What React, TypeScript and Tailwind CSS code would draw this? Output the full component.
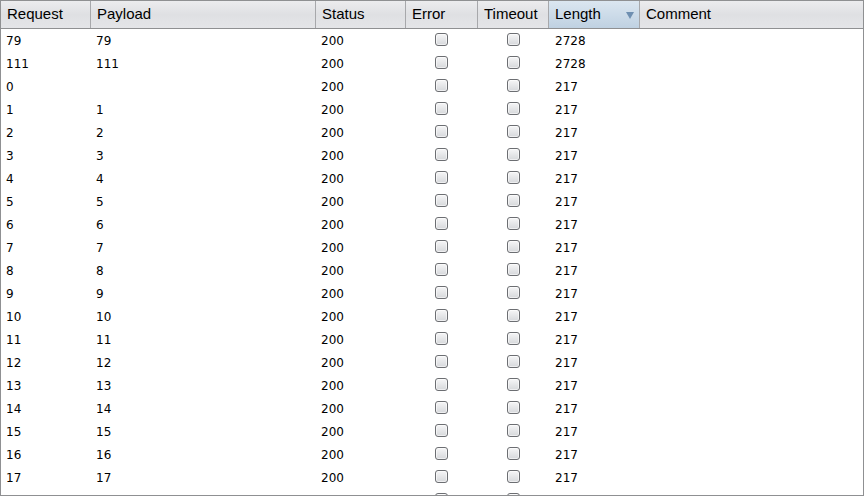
import React from 'react';

interface Row {
  request: string;
  payload: string;
  status: string;
  length: string;
}

const rows: Row[] = [
  { request: '79', payload: '79', status: '200', length: '2728' },
  { request: '111', payload: '111', status: '200', length: '2728' },
  { request: '0', payload: '', status: '200', length: '217' },
  ...Array.from({ length: 17 }).map((_, i) => ({
    request: String(i + 1),
    payload: String(i + 1),
    status: '200',
    length: '217',
  })),
  // partially scrolled-in row at the bottom edge
  { request: '', payload: '', status: '', length: '' },
];

const cols = 'grid grid-cols-[90px_225px_90px_72px_71px_91px_1fr]';

const Checkbox: React.FC = () => (
  <div className="w-[13px] h-[13px] rounded-[3px] border border-[#6c6e72] bg-gradient-to-b from-[#f6f6f7] to-[#d6d8db] shadow-[inset_0_0_0_1px_#ffffff90]" />
);

const HeaderCell: React.FC<{ label: string; active?: boolean; last?: boolean }> = ({ label, active, last }) => (
  <div
    className={`relative flex items-center pl-[6px] h-full ${last ? '' : 'border-r border-[#a7a8ab]'} ${
      active ? 'bg-gradient-to-b from-[#dbe6f0] to-[#bfd1e2]' : ''
    }`}
  >
    {label}
    {active && (
      <svg className="absolute right-[5px] top-[11px]" width="8" height="7" viewBox="0 0 8 7">
        <path d="M0 0 H8 L4 7 Z" fill="#6f8fb1" />
      </svg>
    )}
  </div>
);

export default function App() {
  return (
    <div className="w-[865px] h-[497px] bg-white overflow-hidden">
      <div className="w-[864px] h-[496px] border border-[#8f9092] overflow-hidden relative">
        <div
          className={`${cols} h-[28px] border-b border-[#8f9092] bg-gradient-to-b from-[#ececee] via-[#dfe0e3] to-[#e4e5e8] text-[15px] text-black`}
          style={{ fontFamily: '"Liberation Sans", Arial, sans-serif' }}
        >
          <HeaderCell label="Request" />
          <HeaderCell label="Payload" />
          <HeaderCell label="Status" />
          <HeaderCell label="Error" />
          <HeaderCell label="Timeout" />
          <HeaderCell label="Length" active />
          <HeaderCell label="Comment" last />
        </div>
        <div className="text-[12px] text-black" style={{ fontFamily: '"DejaVu Sans", Tahoma, sans-serif' }}>
          {rows.map((r, i) => (
            <div key={i} className={`${cols} h-[23px] items-center`}>
              <div className="pl-[5px] pt-px">{r.request}</div>
              <div className="pl-[5px] pt-px">{r.payload}</div>
              <div className="pl-[5px] pt-px">{r.status}</div>
              <div className="flex justify-center pr-[2px] mb-[2px]">
                <Checkbox />
              </div>
              <div className="flex justify-center pr-[1px] mb-[2px]">
                <Checkbox />
              </div>
              <div className="pl-[6px] pt-px">{r.length}</div>
              <div />
            </div>
          ))}
        </div>
      </div>
    </div>
  );
}
